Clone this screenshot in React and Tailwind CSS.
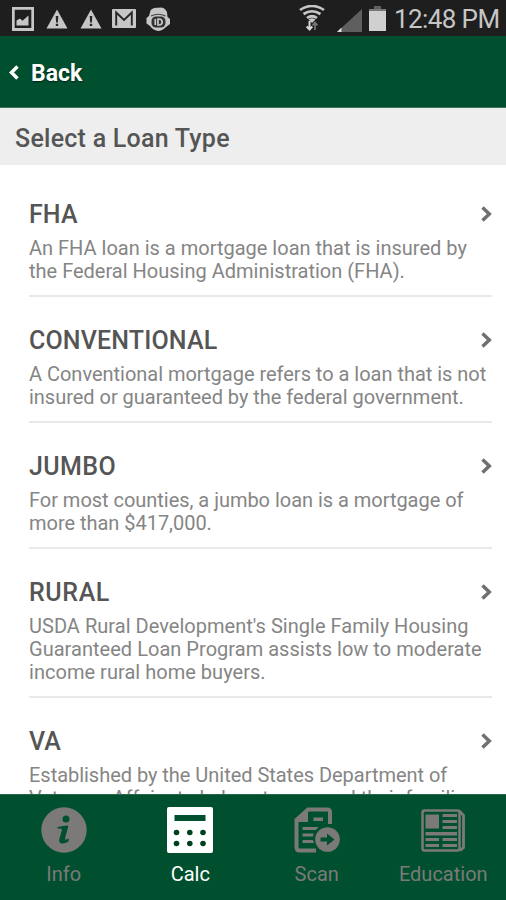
import clsx from 'clsx';

const loanTypes = [
  {
    name: 'FHA',
    spacing: 'tracking-[0.1px]',
    textSpacing: 'tracking-normal',
    lines: ['An FHA loan is a mortgage loan that is insured by', 'the Federal Housing Administration (FHA).'],
  },
  {
    name: 'CONVENTIONAL',
    spacing: 'tracking-[0.15px]',
    textSpacing: 'tracking-[-0.02px]',
    lines: ['A Conventional mortgage refers to a loan that is not', 'insured or guaranteed by the federal government.'],
  },
  {
    name: 'JUMBO',
    spacing: 'tracking-[0.4px]',
    textSpacing: 'tracking-[-0.03px]',
    lines: ['For most counties, a jumbo loan is a mortgage of', 'more than $417,000.'],
  },
  {
    name: 'RURAL',
    spacing: 'tracking-[0.6px]',
    textSpacing: 'tracking-[0.03px]',
    lines: ["USDA Rural Development's Single Family Housing", 'Guaranteed Loan Program assists low to moderate', 'income rural home buyers.'],
  },
  {
    name: 'VA',
    spacing: 'tracking-[0.1px]',
    textSpacing: 'tracking-[-0.03px]',
    lines: ['Established by the United States Department of', 'Veterans Affairs to help veterans and their families'],
  },
];

function WarningIcon() {
  return (
    <svg className="h-[20px] w-[22px]" viewBox="0 0 22 20">
      <path d="M11 0.5 L21.5 19.5 H0.5 Z" fill="#c6c6c6" />
      <path d="M9.7 7 h2.6 l-0.4 6.5 h-1.8 Z M9.8 14.8 h2.4 v2.3 h-2.4 Z" fill="#262626" />
    </svg>
  );
}

function StatusBar() {
  return (
    <div className="flex h-9 shrink-0 items-start bg-[#1e1e1e] pl-3 text-[#c6c6c6]">
      <svg className="mt-[7px] h-6 w-[22px]" viewBox="0 0 22 24">
        <path fillRule="evenodd" d="M0 0 H22 V24 H0 Z M2.7 2.7 V21 H19.3 V2.7 Z" fill="#c6c6c6" />
        <path d="M4.5 18.5 V13.5 L8 11.5 L10.5 13.8 L16.5 8.5 V18.5 Z" fill="#c6c6c6" />
      </svg>
      <div className="ml-3 mt-[9px]"><WarningIcon /></div>
      <div className="ml-[12px] mt-[9px]"><WarningIcon /></div>
      <svg className="ml-[10px] mt-[9px] h-[19px] w-6" viewBox="0 0 24 19">
        <rect width="24" height="19" rx="1" fill="#c6c6c6" />
        <path d="M4.2 16.500 V3.5 L12 11 L19.8 3.5 V16.500" fill="none" stroke="#262626" strokeWidth="1.9" />
      </svg>
      <svg className="ml-2.5 mt-[7px] h-6 w-6" viewBox="0 0 24 24">
        <path d="M4.5 3.5 Q7 0 12.5 0.8 Q18 -0.5 21 5 L21.5 10 L24 12 V17 L20 20 Q16 24 12 24 Q6.500 23 4 19 L0.500 16.500 V11 L3 9 Z" fill="#c6c6c6" />
        <path d="M5 9 Q12 5.500 19.500 9" fill="none" stroke="#444" strokeWidth="1.2" />
        <rect x="5.500" y="9.500" width="14" height="11" rx="4.500" fill="#333" />
        <path d="M9.300 12 V18 M12 12 H13.500 Q16.200 12.500 16.200 15 Q16.200 17.500 13.500 18 H12 Z" fill="none" stroke="#c6c6c6" strokeWidth="1.700" />
      </svg>

      <svg className="ml-[129px] mt-[5px] h-[27px] w-[26px]" viewBox="0 0 26 27">
        <path d="M1 5 Q13 -3 25 5 M4.500 9 Q13 3.500 21.500 9 M8 13 Q13 9.500 18 13" fill="none" stroke="#c6c6c6" strokeWidth="2.700" />
        <path d="M9.500 14.500 Q13 12 16.500 14.500 L13 18 Z" fill="#c6c6c6" />
        <path d="M10.500 16 V24 M7.700 21.500 L10.500 24.500 L13.300 21.500" fill="none" stroke="#d8d8d8" strokeWidth="2" />
        <path d="M16 25 V18 M13.500 20.500 L16 17.500 L18.500 20.500" fill="none" stroke="#777" strokeWidth="1.700" />
      </svg>
      <svg className="ml-[12px] mt-[8px] h-6 w-[25px]" viewBox="0 0 25 24">
        <path d="M0 24 L25 1 V24 Z" fill="#5f5f5f" />
        <path d="M0 24 L4.500 19.500 V24 Z" fill="#ddd" />
      </svg>
      <svg className="ml-[7px] mt-[6px] h-[25px] w-[17px]" viewBox="0 0 17 25">
        <rect x="5" width="7" height="3" fill="#5f5f5f" />
        <rect y="3" width="17" height="22" fill="#d0d0d0" />
        <rect y="3" width="17" height="2" fill="#777" />
      </svg>
      <span className="ml-[8px] mt-[4px] whitespace-nowrap text-[26px] leading-[30px] tracking-[-0.6px]">12:48 PM</span>
    </div>
  );
}

function LoanItem({ name, lines, spacing, textSpacing }) {
  return (
    <li className="ml-[29px] mr-[14px] shrink-0 border-b-2 border-[#e9e9e9] pb-3 pt-[30px]">
      <div className="flex h-7 items-center justify-between">
        <h2 className={clsx('text-[25px] font-medium leading-7 text-[#555]', spacing)}>{name}</h2>
        <svg className="mb-[3px] h-4 w-[11px]" viewBox="0 0 11 16">
          <path d="M1.500 1.500 L8.300 8 L1.500 14.500" fill="none" stroke="#707070" strokeWidth="3.500" />
        </svg>
      </div>
      <p className={clsx('mt-2 whitespace-nowrap text-[20px] leading-[23px] text-[#858585]', textSpacing)}>
        {lines.map((line) => (
          <span key={line} className="block">{line}</span>
        ))}
      </p>
    </li>
  );
}

function InfoIcon() {
  return (
    <svg className="size-[46px]" viewBox="0 0 46 46">
      <circle cx="23" cy="23" r="22.700" fill="#7b7a78" />
      <circle cx="25" cy="12" r="3.500" fill="#00502f" />
      <path d="M16.500 20 Q22 18.500 27.500 18.500 L24 31.500 Q23.500 33.800 28 31.500 L27.500 34.500 Q24 37 20.500 36.500 Q17.500 36 18.500 31.500 L21 22.500 Q20.500 21 16.500 21.500 Z" fill="#00502f" />
    </svg>
  );
}

function CalcIcon() {
  return (
    <svg className="size-[46px]" viewBox="0 0 46 46">
      <rect width="46" height="46" rx="2" fill="#fff" />
      <rect x="7.500" y="8" width="31" height="6" fill="#00502f" />
      {[9.5, 22.8, 36].map((cx) => (
        <g key={cx} fill="#00401f">
          <circle cx={cx} cy="25.500" r="2.800" />
          <circle cx={cx} cy="36.500" r="2.800" />
        </g>
      ))}
    </svg>
  );
}

function ScanIcon() {
  return (
    <svg className="size-[46px]" viewBox="0 0 46 46">
      <path d="M36 17 V5 Q36 2.500 33 2.500 H14 L2.500 13 V40 Q2.500 43.500 5.500 43.500 H22" fill="none" stroke="#7b7a78" strokeWidth="4" />
      <path d="M14 1 V15 H1.500 Z M19.500 10.500 H29 V14 H19.500 Z M8.500 20 H24.500 L22 23 H8.500 Z M8.500 26.500 H19.500 L19 29.500 H8.500 Z M8.500 33 H19 L20 36 H8.500 Z" fill="#7b7a78" />
      <circle cx="33.500" cy="32.500" r="12.300" fill="#7b7a78" />
      <path d="M26.500 30.500 H33 V26.500 L40.500 32.500 L33 38.500 V34.500 H26.500 Z" fill="#00502f" />
    </svg>
  );
}

function EducationIcon() {
  return (
    <svg className="size-[46px]" viewBox="0 0 46 46">
      <rect x="2.500" y="3.500" width="37" height="40" rx="2" fill="none" stroke="#7b7a78" strokeWidth="2.500" />
      <path d="M39.500 4 L43.500 8.500 V40.500 L40 43.500" fill="none" stroke="#7b7a78" strokeWidth="2.800" />
      <path d="M5.500 7.500 H19 V21.500 H5.500 Z M22.500 7 H37 V10 H22.500 Z M22.500 13 H37 V16 H22.500 Z M22.500 19 H37 V22 H22.500 Z M5.500 25 H37 V28.500 H5.500 Z M5.500 31 H19 V34 H5.500 Z M22.500 31 H37 V34 H22.500 Z M5.500 37 H19 V40 H5.500 Z M22.500 37 H37 V40 H22.500 Z" fill="#7b7a78" />
    </svg>
  );
}

const tabs = [
  { label: 'Info', Icon: InfoIcon },
  { label: 'Calc', Icon: CalcIcon, active: true },
  { label: 'Scan', Icon: ScanIcon },
  { label: 'Education', Icon: EducationIcon },
];

export default function App() {
  return (
    <div className="flex h-[900px] w-[506px] flex-col overflow-hidden bg-white font-['Roboto',sans-serif]">
      <StatusBar />

      {/* Header */}
      <header className="flex h-[72px] shrink-0 items-center border-b border-[#3c7558] bg-[#00502f] pl-[9px] text-white">
        <svg className="mt-px h-[15px] w-[10px]" viewBox="0 0 10 15">
          <path d="M8.500 1.500 L2.500 7.500 L8.500 13.500" fill="none" stroke="#fff" strokeWidth="3.500" />
        </svg>
        <span className="ml-[12px] mt-[5px] text-[23px] font-bold leading-7 [text-shadow:0_1px_2px_rgba(0,0,0,0.6)]">Back</span>
      </header>
      <div className="flex h-[57px] shrink-0 items-center bg-[#eee] pl-[15px]">
        <h1 className="mt-[4px] text-[25px] font-medium leading-8 tracking-[0.25px] text-[#555]">Select a Loan Type</h1>
      </div>

      {/* Loan types */}
      <ul className="flex min-h-0 flex-1 flex-col overflow-hidden pt-1.5">
        {loanTypes.map((loan) => (
          <LoanItem key={loan.name} {...loan} />
        ))}
      </ul>

      {/* Bottom tabs */}
      <nav className="grid h-[106px] shrink-0 grid-cols-4 border-t border-[#2a6447] bg-[#00502f]">
        {tabs.map(({ label, Icon, active }) => (
          <div key={label} className={clsx('flex flex-col items-center pl-px pt-3', active ? 'text-white' : 'text-[#7b7a78]')}>
            <Icon />
            <span className="mt-[9px] text-[20px] leading-6">{label}</span>
          </div>
        ))}
      </nav>
    </div>
  );
}
